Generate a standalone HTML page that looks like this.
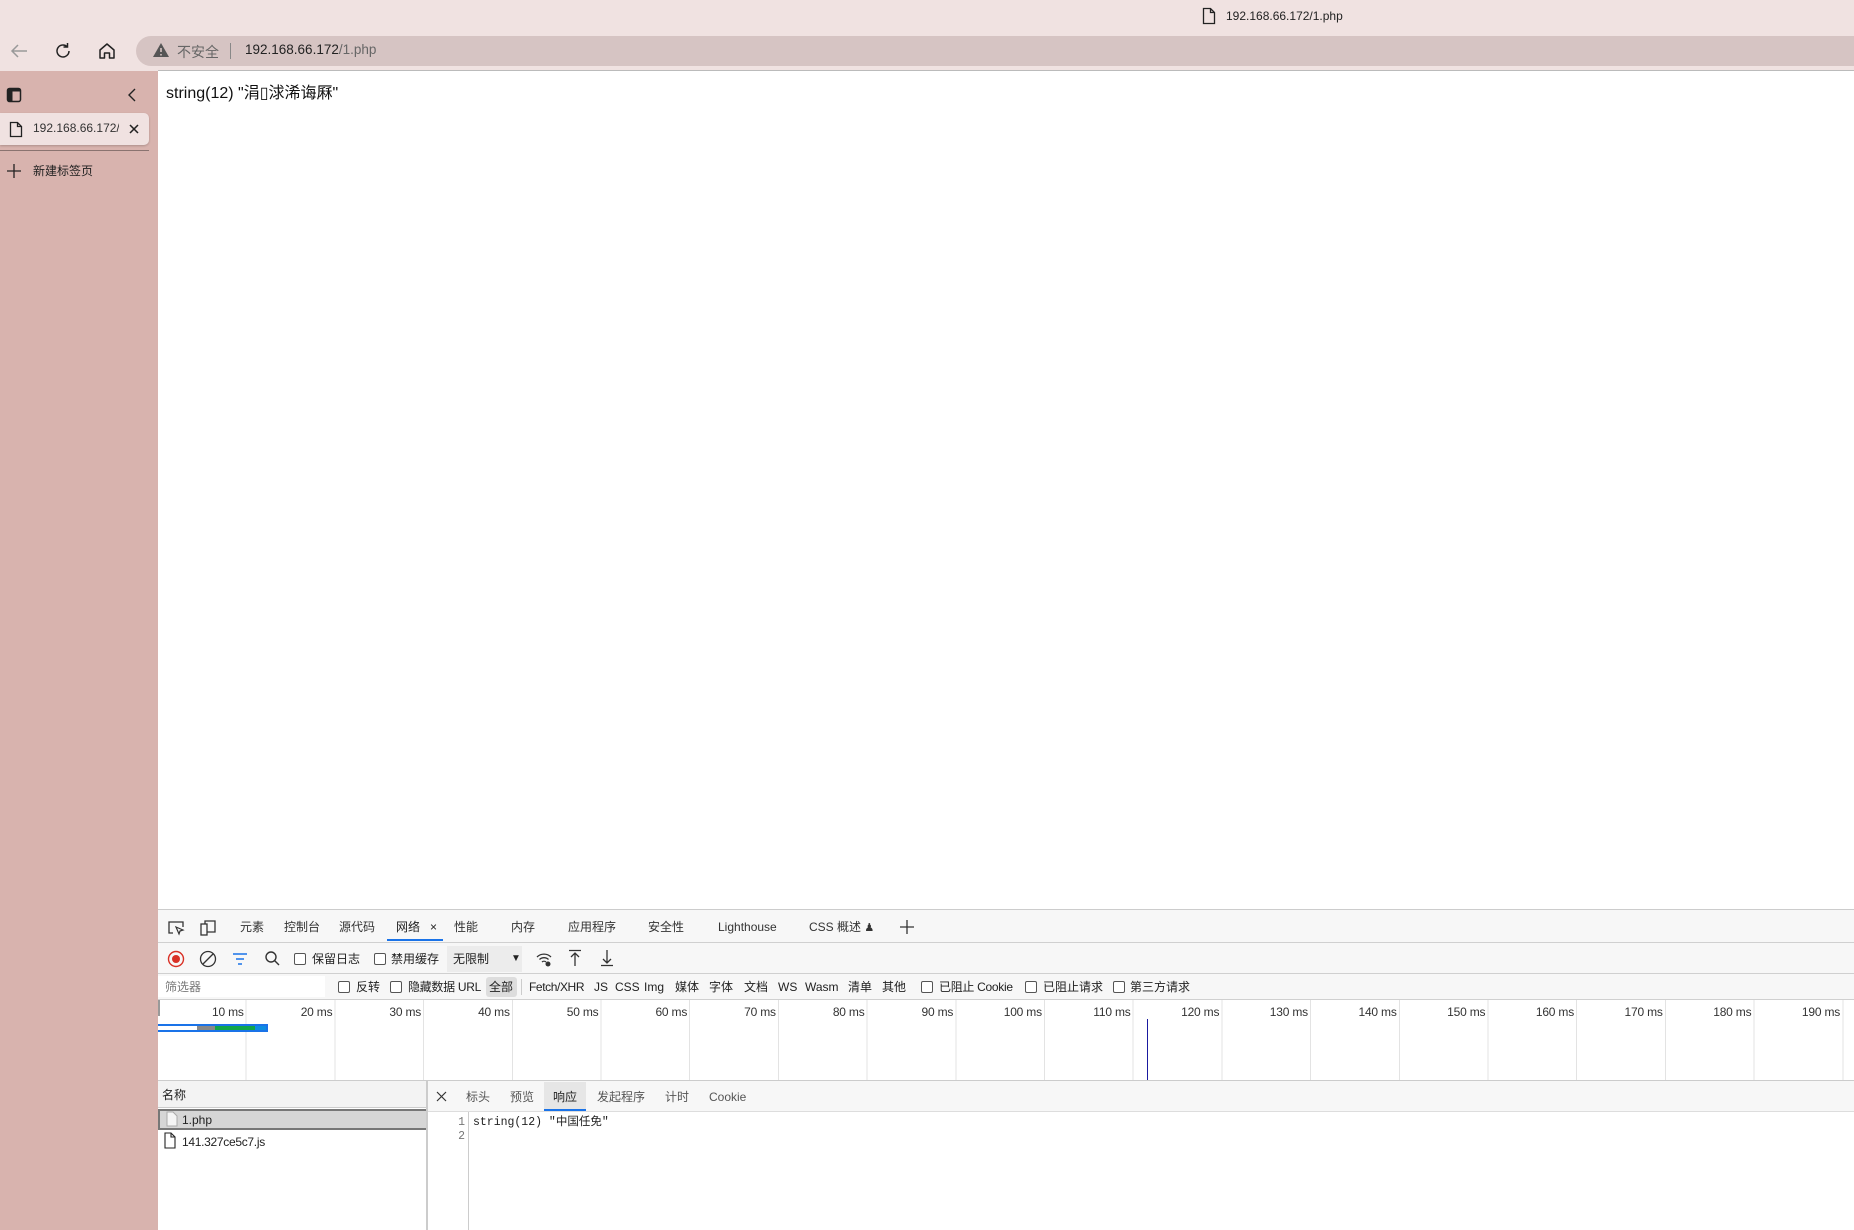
<!DOCTYPE html>
<html><head><meta charset="utf-8">
<style>
*{margin:0;padding:0;box-sizing:border-box}
body{width:1854px;height:1230px;overflow:hidden;position:relative;background:#fff;font-family:"Liberation Sans","Noto Sans CJK SC",sans-serif;color:#222}
.a{position:absolute;white-space:nowrap}
.dt{font-size:12px;color:#333;line-height:16px}
.cb{position:absolute;width:12px;height:12px;border:1px solid #555;border-radius:2px;background:#fff}
</style></head><body>
<!-- title bar -->
<div class="a" style="left:0;top:0;width:1854px;height:35px;background:#f0e2e1"></div>
<svg class="a" style="left:1202px;top:7px" width="14" height="18" viewBox="0 0 14 18"><path d="M1.5 1.5h7l4 4v11h-11z M8.5 1.5v4h4" fill="none" stroke="#222" stroke-width="1.3"/></svg>
<div class="a" style="left:1226px;top:9px;font-size:12px;color:#222">192.168.66.172/1.php</div>
<!-- toolbar -->
<div class="a" style="left:0;top:35px;width:1854px;height:36px;background:#f0e2e1"></div>
<svg class="a" style="left:9px;top:42px" width="20" height="18" viewBox="0 0 20 18"><path d="M18 9H3M9 3L3 9l6 6" fill="none" stroke="#999" stroke-width="1.5"/></svg>
<svg class="a" style="left:53px;top:41px" width="20" height="20" viewBox="0 0 20 20"><path d="M16 10a6 6 0 1 1-2-4.5M14.5 2v4h-4" fill="none" stroke="#222" stroke-width="1.5"/></svg>
<svg class="a" style="left:97px;top:41px" width="20" height="20" viewBox="0 0 20 20"><path d="M3 9l7-6 7 6v8h-4.5v-5h-5v5H3z" fill="none" stroke="#222" stroke-width="1.5" stroke-linejoin="round"/></svg>
<div class="a" style="left:136px;top:36px;width:1740px;height:30px;border-radius:15px;background:#d6c4c3"></div>
<svg class="a" style="left:152px;top:42px" width="18" height="16" viewBox="0 0 18 16"><path d="M9 1L17 15H1z" fill="#555"/><path d="M9 6v4M9 12v1.5" stroke="#d6c4c3" stroke-width="1.6"/></svg>
<div class="a" style="left:177px;top:42px;font-size:14px;color:#666">不安全</div>
<div class="a" style="left:230px;top:43px;width:1px;height:16px;background:#888"></div>
<div class="a" style="left:245px;top:42px;font-size:13.5px;color:#222">192.168.66.172<span style="color:#666">/1.php</span></div>
<!-- sidebar -->
<div class="a" style="left:0;top:71px;width:158px;height:1159px;background:#d8b3ae"></div>
<svg class="a" style="left:6px;top:87px" width="16" height="16" viewBox="0 0 16 16"><rect x="1.5" y="1.5" width="13" height="13" rx="2" fill="none" stroke="#222" stroke-width="1.5"/><rect x="1.5" y="1.5" width="5" height="13" fill="#222"/><rect x="1.5" y="1.5" width="13" height="3" fill="#222"/></svg>
<svg class="a" style="left:127px;top:87px" width="10" height="16" viewBox="0 0 10 16"><path d="M8 2L2 8l6 6" fill="none" stroke="#222" stroke-width="1.4"/></svg>
<div class="a" style="left:0;top:113px;width:149px;height:32px;background:#f0e2e1;border-radius:0 5px 5px 0;box-shadow:0 1px 2px rgba(0,0,0,.2)"></div>
<svg class="a" style="left:9px;top:121px" width="14" height="17" viewBox="0 0 14 17"><path d="M1.5 1.5h7l4 4v10h-11z M8.5 1.5v4h4" fill="none" stroke="#222" stroke-width="1.3"/></svg>
<div class="a" style="left:33px;top:121px;font-size:12px;color:#333;width:86px;overflow:hidden">192.168.66.172/1</div>
<svg class="a" style="left:128px;top:123px" width="12" height="12" viewBox="0 0 12 12"><path d="M2 2l8 8M10 2l-8 8" stroke="#222" stroke-width="1.5"/></svg>
<div class="a" style="left:0;top:150px;width:149px;height:1px;background:#8a7370"></div>
<svg class="a" style="left:7px;top:164px" width="14" height="14" viewBox="0 0 14 14"><path d="M7 0v14M0 7h14" stroke="#222" stroke-width="1.3"/></svg>
<div class="a" style="left:33px;top:162px;font-size:12px;color:#222">新建标签页</div>
<!-- content -->
<div class="a" style="left:158px;top:70px;width:1696px;height:1px;background:#bbb"></div>
<div class="a" style="left:166px;top:79px;font-size:16px;color:#111">string(12) "涓▯浗浠诲厤"</div>
<!-- devtools -->
<div class="a" style="left:158px;top:909px;width:1696px;height:90px;background:#f7f7f7;border-top:1px solid #ccc"></div>
<div class="a" style="left:158px;top:942px;width:1696px;height:1px;background:#d0d0d0"></div>
<div class="a" style="left:158px;top:973px;width:1696px;height:1px;background:#d0d0d0"></div>
<div class="a" style="left:158px;top:999px;width:1696px;height:1px;background:#d0d0d0"></div>
<svg class="a" style="left:167px;top:919px" width="18" height="18" viewBox="0 0 18 18"><path d="M6 14H2V3h14v5" fill="none" stroke="#333" stroke-width="1.3"/><path d="M9 8l7 3-3 1-1 3z" fill="none" stroke="#333" stroke-width="1.2"/></svg>
<svg class="a" style="left:199px;top:919px" width="18" height="18" viewBox="0 0 18 18"><rect x="2" y="5" width="6" height="11" fill="none" stroke="#333" stroke-width="1.3"/><path d="M6 5V2h10v11H8" fill="none" stroke="#333" stroke-width="1.3"/></svg>
<div class="a dt" style="left:240px;top:919px">元素</div>
<div class="a dt" style="left:284px;top:919px">控制台</div>
<div class="a dt" style="left:339px;top:919px">源代码</div>
<div class="a dt" style="left:396px;top:919px;color:#222">网络</div>
<div class="a dt" style="left:430px;top:919px;color:#222">×</div>
<div class="a" style="left:387px;top:939px;width:56px;height:2px;background:#1a73e8"></div>
<div class="a dt" style="left:454px;top:919px">性能</div>
<div class="a dt" style="left:511px;top:919px">内存</div>
<div class="a dt" style="left:568px;top:919px">应用程序</div>
<div class="a dt" style="left:648px;top:919px">安全性</div>
<div class="a dt" style="left:718px;top:919px">Lighthouse</div>
<div class="a dt" style="left:809px;top:919px">CSS 概述 <span style="font-size:11px">♟</span></div>
<svg class="a" style="left:899px;top:919px" width="16" height="16" viewBox="0 0 16 16"><path d="M8 1v14M1 8h14" stroke="#333" stroke-width="1.3"/></svg>
<!-- row 2 -->
<svg class="a" style="left:167px;top:950px" width="18" height="18" viewBox="0 0 18 18"><circle cx="9" cy="9" r="7.5" fill="none" stroke="#d93025" stroke-width="1.4"/><circle cx="9" cy="9" r="4" fill="#d93025"/></svg>
<svg class="a" style="left:199px;top:950px" width="18" height="18" viewBox="0 0 18 18"><circle cx="9" cy="9" r="7.5" fill="none" stroke="#333" stroke-width="1.3"/><path d="M4 14L14 4" stroke="#333" stroke-width="1.3"/></svg>
<svg class="a" style="left:232px;top:952px" width="16" height="14" viewBox="0 0 16 14"><path d="M1 2h14M4 7h8M6 12h4" stroke="#1a73e8" stroke-width="1.4"/></svg>
<svg class="a" style="left:264px;top:950px" width="17" height="17" viewBox="0 0 17 17"><circle cx="7" cy="7" r="5" fill="none" stroke="#333" stroke-width="1.4"/><path d="M10.5 10.5L15 15" stroke="#333" stroke-width="1.4"/></svg>
<div class="cb" style="left:294px;top:953px"></div>
<div class="a dt" style="left:312px;top:951px;color:#222">保留日志</div>
<div class="cb" style="left:374px;top:953px"></div>
<div class="a dt" style="left:391px;top:951px;color:#222">禁用缓存</div>
<div class="a" style="left:447px;top:946px;width:75px;height:26px;background:#ececec"></div>
<div class="a dt" style="left:453px;top:951px;color:#222">无限制</div>
<div class="a" style="left:511px;top:953px;font-size:10px">▼</div>
<svg class="a" style="left:535px;top:950px" width="18" height="18" viewBox="0 0 18 18"><path d="M2 7a10 10 0 0 1 14 0M4.5 9.5a6.5 6.5 0 0 1 9 0M7 12a3 3 0 0 1 4 0" fill="none" stroke="#333" stroke-width="1.3"/><circle cx="13" cy="14" r="2.5" fill="#333"/></svg>
<svg class="a" style="left:568px;top:949px" width="14" height="18" viewBox="0 0 14 18"><path d="M1 1.5h12M7 4v13M3 8l4-4 4 4" fill="none" stroke="#333" stroke-width="1.3"/></svg>
<svg class="a" style="left:600px;top:949px" width="14" height="18" viewBox="0 0 14 18"><path d="M1 16.5h12M7 1v13M3 10l4 4 4-4" fill="none" stroke="#333" stroke-width="1.3"/></svg>
<!-- filter row -->
<div class="a" style="left:158px;top:976px;width:167px;height:21px;background:#fff"></div>
<div class="a dt" style="left:165px;top:979px;color:#777">筛选器</div>
<div class="cb" style="left:338px;top:981px"></div>
<div class="a dt" style="left:356px;top:979px;color:#222">反转</div>
<div class="cb" style="left:390px;top:981px"></div>
<div class="a dt" style="left:408px;top:979px;color:#222;letter-spacing:-0.3px">隐藏数据 URL</div>
<div class="a" style="left:486px;top:977px;width:31px;height:20px;background:#ddd;border-radius:3px"></div>
<div class="a dt" style="left:489px;top:979px;color:#222">全部</div>
<div class="a" style="left:521px;top:979px;width:1px;height:16px;background:#ccc"></div>
<div class="a dt" style="left:529px;top:979px;color:#222;letter-spacing:-0.4px">Fetch/XHR</div>
<div class="a dt" style="left:594px;top:979px;color:#222">JS</div>
<div class="a dt" style="left:615px;top:979px;color:#222">CSS</div>
<div class="a dt" style="left:644px;top:979px;color:#222">Img</div>
<div class="a dt" style="left:675px;top:979px;color:#222">媒体</div>
<div class="a dt" style="left:709px;top:979px;color:#222">字体</div>
<div class="a dt" style="left:744px;top:979px;color:#222">文档</div>
<div class="a dt" style="left:778px;top:979px;color:#222">WS</div>
<div class="a dt" style="left:805px;top:979px;color:#222">Wasm</div>
<div class="a dt" style="left:848px;top:979px;color:#222">清单</div>
<div class="a dt" style="left:882px;top:979px;color:#222">其他</div>
<div class="cb" style="left:921px;top:981px"></div>
<div class="a dt" style="left:939px;top:979px;color:#222;letter-spacing:-0.3px">已阻止 Cookie</div>
<div class="cb" style="left:1025px;top:981px"></div>
<div class="a dt" style="left:1043px;top:979px;color:#222">已阻止请求</div>
<div class="cb" style="left:1113px;top:981px"></div>
<div class="a dt" style="left:1130px;top:979px;color:#222">第三方请求</div>
<!-- timeline -->
<div class="a" style="left:158px;top:1000px;width:1696px;height:80px;background:repeating-linear-gradient(to right,transparent 0,transparent 87.7px,#e3e3e3 87.7px,#e3e3e3 88.7px)"></div>
<div class="a" style="left:158px;top:1000px;width:2px;height:16px;background:#999"></div>
<div class="a" style="left:158px;top:1005px;display:flex;font-size:12px;color:#333;letter-spacing:-0.2px">
<div style="width:88.7px;text-align:right;padding-right:3px">10 ms</div><div style="width:88.7px;text-align:right;padding-right:3px">20 ms</div><div style="width:88.7px;text-align:right;padding-right:3px">30 ms</div><div style="width:88.7px;text-align:right;padding-right:3px">40 ms</div><div style="width:88.7px;text-align:right;padding-right:3px">50 ms</div><div style="width:88.7px;text-align:right;padding-right:3px">60 ms</div><div style="width:88.7px;text-align:right;padding-right:3px">70 ms</div><div style="width:88.7px;text-align:right;padding-right:3px">80 ms</div><div style="width:88.7px;text-align:right;padding-right:3px">90 ms</div><div style="width:88.7px;text-align:right;padding-right:3px">100 ms</div><div style="width:88.7px;text-align:right;padding-right:3px">110 ms</div><div style="width:88.7px;text-align:right;padding-right:3px">120 ms</div><div style="width:88.7px;text-align:right;padding-right:3px">130 ms</div><div style="width:88.7px;text-align:right;padding-right:3px">140 ms</div><div style="width:88.7px;text-align:right;padding-right:3px">150 ms</div><div style="width:88.7px;text-align:right;padding-right:3px">160 ms</div><div style="width:88.7px;text-align:right;padding-right:3px">170 ms</div><div style="width:88.7px;text-align:right;padding-right:3px">180 ms</div><div style="width:88.7px;text-align:right;padding-right:3px">190 ms</div></div>
<div class="a" style="left:158px;top:1024px;width:110px;height:8px;background:#1a73e8"></div>
<div class="a" style="left:158px;top:1026px;width:39px;height:4px;background:#fff"></div>
<div class="a" style="left:197px;top:1026px;width:18px;height:4px;background:#888"></div>
<div class="a" style="left:215px;top:1026px;width:40px;height:4px;background:#0fa54a"></div>
<div class="a" style="left:255px;top:1026px;width:11px;height:4px;background:#0c8de0"></div>
<div class="a" style="left:1147px;top:1019px;width:1px;height:61px;background:#1a1aa0"></div>
<!-- bottom -->
<div class="a" style="left:158px;top:1080px;width:1696px;height:1px;background:#ccc"></div>
<div class="a" style="left:158px;top:1081px;width:268px;height:27px;background:#f3f3f3;border-bottom:1px solid #ccc"></div>
<div class="a dt" style="left:162px;top:1087px;color:#222">名称</div>
<div class="a" style="left:426px;top:1081px;width:2px;height:149px;background:#ccc"></div>
<div class="a" style="left:158px;top:1109px;width:268px;height:21px;background:#d6d6d6;border:2px solid #777;border-right:none"></div>
<svg class="a" style="left:166px;top:1111px" width="12" height="16" viewBox="0 0 12 16"><path d="M1 1h6l4 4v10H1z" fill="#f5f5f5" stroke="#aaa"/></svg>
<div class="a dt" style="left:182px;top:1112px;color:#222">1.php</div>
<svg class="a" style="left:164px;top:1132px" width="12" height="17" viewBox="0 0 12 17"><path d="M1 1h6l4 4v11H1z M7 1v4h4" fill="#fff" stroke="#222" stroke-width="1.1"/></svg>
<div class="a dt" style="left:182px;top:1134px;color:#222;letter-spacing:-0.3px">141.327ce5c7.js</div>
<div class="a" style="left:428px;top:1081px;width:1426px;height:31px;background:#f7f7f7;border-bottom:1px solid #ddd"></div>
<svg class="a" style="left:436px;top:1091px" width="11" height="11" viewBox="0 0 11 11"><path d="M1 1l9 9M10 1l-9 9" stroke="#333" stroke-width="1.2"/></svg>
<div class="a dt" style="left:466px;top:1089px;color:#555">标头</div>
<div class="a dt" style="left:510px;top:1089px;color:#555">预览</div>
<div class="a" style="left:544px;top:1082px;width:42px;height:29px;background:#e6e6e6"></div>
<div class="a" style="left:544px;top:1109px;width:42px;height:2px;background:#1a73e8"></div>
<div class="a dt" style="left:553px;top:1089px;color:#222">响应</div>
<div class="a dt" style="left:597px;top:1089px;color:#555">发起程序</div>
<div class="a dt" style="left:665px;top:1089px;color:#555">计时</div>
<div class="a dt" style="left:709px;top:1089px;color:#555">Cookie</div>
<div class="a" style="left:468px;top:1112px;width:1px;height:118px;background:#ccc"></div>
<div class="a" style="left:455px;top:1116px;font-family:'Liberation Mono','Noto Sans CJK SC',monospace;font-size:11.5px;color:#777;line-height:14px;text-align:right;width:10px">1<br>2</div>
<div class="a" style="left:473px;top:1116px;font-family:'Liberation Mono','Noto Sans CJK SC',monospace;font-size:11.5px;color:#222;line-height:14px">string(12) "中国任免"</div>
</body></html>
